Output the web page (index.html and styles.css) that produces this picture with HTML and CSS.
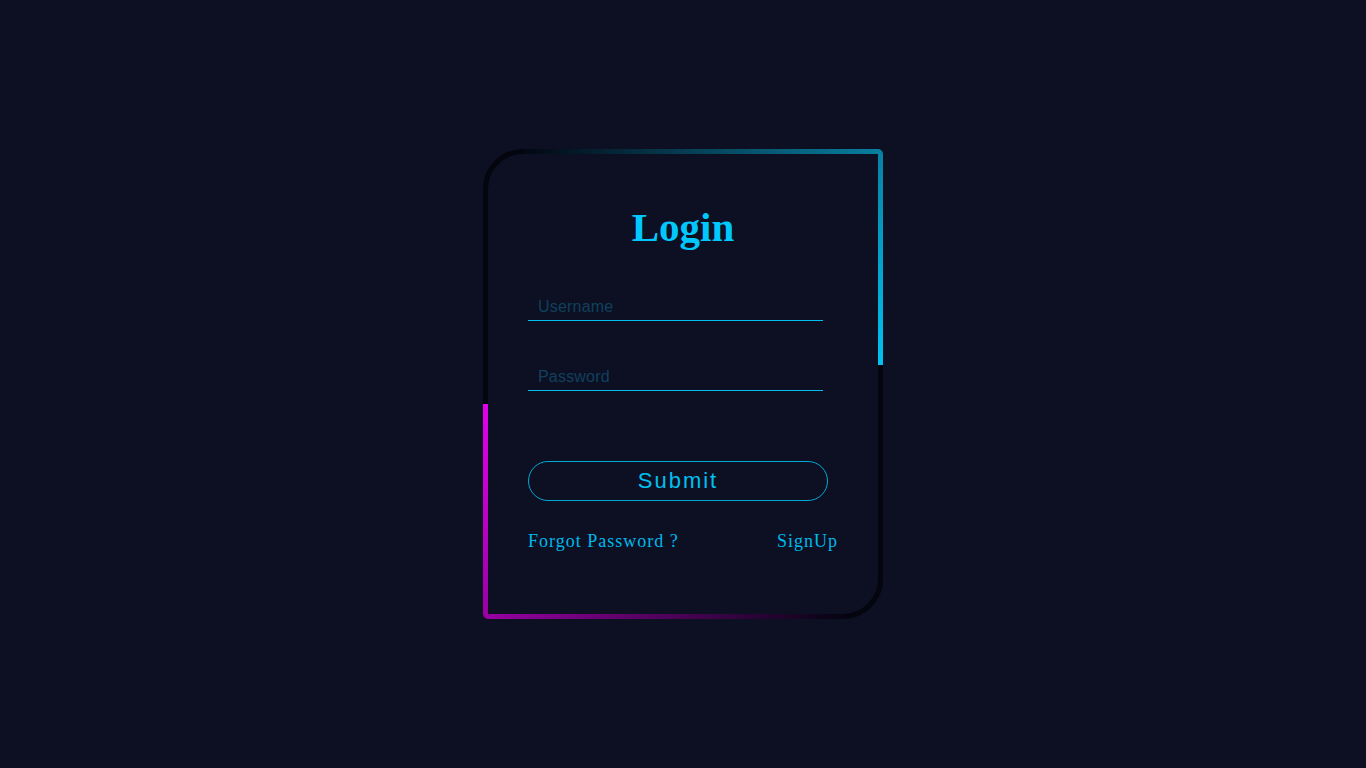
FILE: index.html
```html
<!DOCTYPE html>
<html lang="en">
<head>
<meta charset="UTF-8">
<title>Login</title>
<link rel="stylesheet" href="styles.css">
</head>
<body>
  <main class="page">
    <form class="card" onsubmit="return false;">
      <h1 class="title">Login</h1>
      <input class="field field-user" type="text" placeholder="Username">
      <input class="field field-pass" type="password" placeholder="Password" autofocus>
      <button class="submit" type="submit">Submit</button>
      <div class="links">
        <a class="link" href="#">Forgot Password ?</a>
        <a class="link" href="#">SignUp</a>
      </div>
    </form>
  </main>
</body>
</html>
```

FILE: styles.css
```css
* {
  box-sizing: border-box;
}

html, body {
  margin: 0;
  padding: 0;
  height: 100%;
}

body {
  background: #0c1022;
  font-family: "Liberation Serif", "Times New Roman", serif;
}

.page {
  height: 768px;
  display: flex;
  align-items: center;
  justify-content: center;
}

.card {
  position: relative;
  width: 400px;
  height: 470px;
  border: 5px solid #04050f;
  border-radius: 40px 5px 40px 5px;
  padding: 50px 40px 0 40px;
  display: flex;
  flex-direction: column;
  align-items: flex-start;
}

.card::before {
  content: "";
  position: absolute;
  top: -5px;
  right: -5px;
  width: 400px;
  height: 216px;
  border-top-right-radius: 5px;
  background:
    linear-gradient(to right, rgba(8, 128, 160, 0) 8%, #0880a2) top left / 100% 5px no-repeat,
    linear-gradient(to bottom, #0880a2, #00c2f0) top right / 5px 100% no-repeat;
  pointer-events: none;
}

.card::after {
  content: "";
  position: absolute;
  bottom: -5px;
  left: -5px;
  width: 400px;
  height: 215px;
  border-bottom-left-radius: 5px;
  background:
    linear-gradient(to right, #9800a4, rgba(152, 0, 164, 0) 92%) bottom left / 100% 5px no-repeat,
    linear-gradient(to bottom, #e400ee, #9800a4) bottom left / 5px 100% no-repeat;
  pointer-events: none;
}

.title {
  align-self: stretch;
  margin: 0;
  font-size: 41px;
  line-height: 46px;
  font-weight: bold;
  text-align: center;
  color: #00c8ff;
}

.field {
  display: block;
  width: 295px;
  height: 26px;
  margin: 45px 0 0 0;
  padding: 0 10px 2px 10px;
  border: none;
  border-bottom: 1px solid #00c0f0;
  background: transparent;
  outline: none;
  font-family: "Liberation Sans", Arial, sans-serif;
  font-size: 16px;
  letter-spacing: 0.2px;
  color: #00c0f0;
  caret-color: #00c0f0;
}

.field-pass {
  margin-top: 44px;
}

.field::placeholder {
  color: #10405e;
  opacity: 1;
}

.submit {
  display: block;
  width: 300px;
  height: 40px;
  margin-top: 70px;
  padding: 0;
  border: 1px solid #00a8d8;
  border-radius: 20px;
  background: transparent;
  font-family: "Liberation Sans", Arial, sans-serif;
  font-size: 22px;
  letter-spacing: 2px;
  color: #00c0f0;
  cursor: pointer;
}

.links {
  align-self: stretch;
  margin-top: 29px;
  display: flex;
  justify-content: space-between;
  font-size: 18px;
  line-height: 22px;
  letter-spacing: 1px;
}

.link {
  color: #00b8ec;
  text-decoration: none;
}
```
